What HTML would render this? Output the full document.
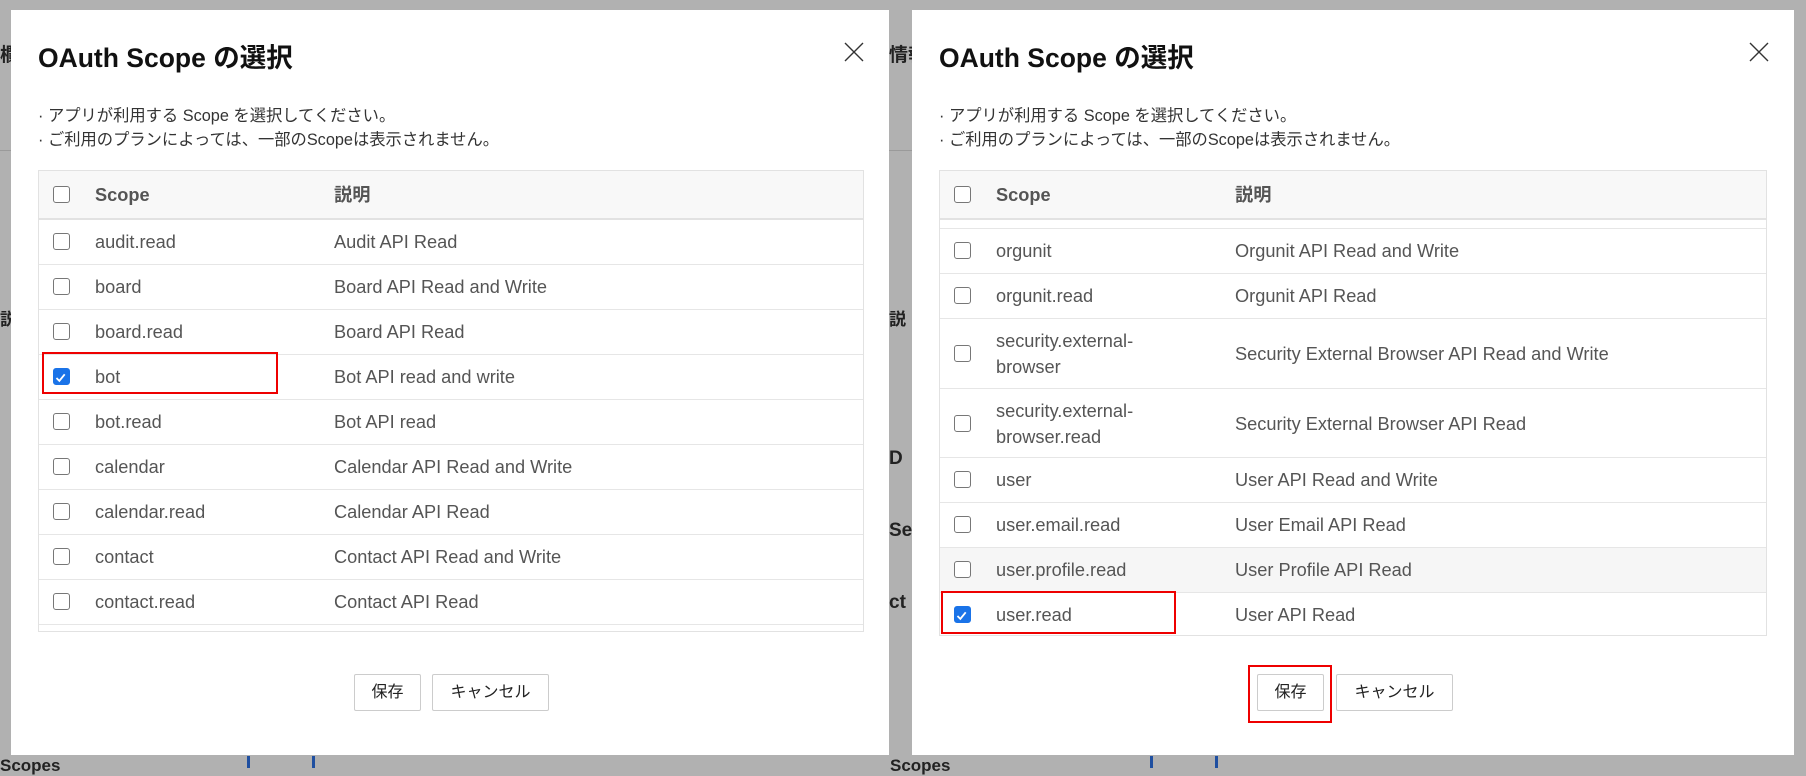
<!DOCTYPE html>
<html><head><meta charset="utf-8"><style>
*{box-sizing:border-box;margin:0;padding:0}
body{width:1806px;height:766px;background:#b1b1b1;position:relative;overflow:hidden;font-family:"Liberation Sans","Noto Sans CJK JP",sans-serif;color:#555}
.bgt{position:absolute;font-weight:bold;color:#222;font-size:19px}
.line{position:absolute;height:1px;background:#9a9a9a}
.modal{position:absolute;top:10px;height:745px;background:#fff}
.title{position:absolute;left:27px;top:26px;font-size:26.5px;font-weight:bold;color:#111}
.close{position:absolute;top:32px;width:20px;height:20px}
.note{position:absolute;left:27px;font-size:16.3px;color:#333}
.tbl{position:absolute;left:27px;width:826px;border:1px solid #e2e2e2;overflow:hidden;background:#fff}
.row{position:absolute;left:0;right:0;border-bottom:1px solid #e6e6e6;font-size:18.2px;color:#555}
.row.h{background:#f8f8f8;font-weight:bold;border-bottom:2px solid #e2e2e2}
.cb{position:absolute;left:14px;width:17px;height:17px;border:1.5px solid #777;border-radius:3px;background:#fff}
.cb.on{background:#1a73e8;border-color:#1a73e8}
.sc{position:absolute;left:56px;line-height:26px}
.ds{position:absolute;left:295px}
.red{position:absolute;border:2px solid #e00}
.btn{position:absolute;top:664px;height:37px;border:1px solid #ccc;border-radius:2px;background:#fff;font-size:16px;color:#222;text-align:center;line-height:35px}
</style></head><body>
<div class="bgt" style="left:0;top:40px">欄</div>
<div class="bgt" style="left:889px;top:40px">情報</div>
<div class="line" style="left:0;top:150px;width:12px"></div>
<div class="line" style="left:889px;top:150px;width:23px"></div>
<div class="bgt" style="left:0;top:305px;font-size:17px">説</div>
<div class="bgt" style="left:889px;top:305px;font-size:17px">説</div>
<div class="bgt" style="left:889px;top:448px">D</div>
<div class="bgt" style="left:889px;top:520px">Sec</div>
<div class="bgt" style="left:889px;top:592px">ct</div>
<div class="bgt" style="left:0;top:756px;font-size:17px">Scopes</div>
<div class="bgt" style="left:890px;top:756px;font-size:17px">Scopes</div>
<div style="position:absolute;left:247px;top:756px;width:68px;height:12px;border-left:3px solid #1f4fa0;border-right:3px solid #1f4fa0"></div>
<div style="position:absolute;left:1150px;top:756px;width:68px;height:12px;border-left:3px solid #1f4fa0;border-right:3px solid #1f4fa0"></div>

<!-- Left modal -->
<div class="modal" style="left:11px;width:878px">
  <div class="title">OAuth Scope の選択</div>
  <svg class="close" style="left:833px" viewBox="0 0 20 20"><path d="M1 1L19 19M19 1L1 19" stroke="#333" stroke-width="1.4"/></svg>
  <div class="note" style="top:92px">· アプリが利用する Scope を選択してください。</div>
  <div class="note" style="top:116px">· ご利用のプランによっては、一部のScopeは表示されません。</div>
  <div class="tbl" style="top:160px;height:462px">
    <div class="row h" style="top:0;height:49px"><div class="cb" style="top:15px"></div><div class="sc" style="top:11px">Scope</div><div class="ds" style="top:11px;line-height:26px">説明</div></div>
    <div class="row" style="top:49px;height:45px"><div class="cb" style="top:13px"></div><div class="sc" style="top:9px">audit.read</div><div class="ds" style="top:9px;line-height:26px">Audit API Read</div></div>
    <div class="row" style="top:94px;height:45px"><div class="cb" style="top:13px"></div><div class="sc" style="top:9px">board</div><div class="ds" style="top:9px;line-height:26px">Board API Read and Write</div></div>
    <div class="row" style="top:139px;height:45px"><div class="cb" style="top:13px"></div><div class="sc" style="top:9px">board.read</div><div class="ds" style="top:9px;line-height:26px">Board API Read</div></div>
    <div class="row" style="top:184px;height:45px"><div class="cb on" style="top:13px"><svg viewBox="0 0 17 17" width="14" height="14"><path d="M3 8.5L6.5 12L13 4" stroke="#fff" stroke-width="2.2" fill="none"/></svg></div><div class="sc" style="top:9px">bot</div><div class="ds" style="top:9px;line-height:26px">Bot API read and write</div></div>
    <div class="row" style="top:229px;height:45px"><div class="cb" style="top:13px"></div><div class="sc" style="top:9px">bot.read</div><div class="ds" style="top:9px;line-height:26px">Bot API read</div></div>
    <div class="row" style="top:274px;height:45px"><div class="cb" style="top:13px"></div><div class="sc" style="top:9px">calendar</div><div class="ds" style="top:9px;line-height:26px">Calendar API Read and Write</div></div>
    <div class="row" style="top:319px;height:45px"><div class="cb" style="top:13px"></div><div class="sc" style="top:9px">calendar.read</div><div class="ds" style="top:9px;line-height:26px">Calendar API Read</div></div>
    <div class="row" style="top:364px;height:45px"><div class="cb" style="top:13px"></div><div class="sc" style="top:9px">contact</div><div class="ds" style="top:9px;line-height:26px">Contact API Read and Write</div></div>
    <div class="row" style="top:409px;height:45px"><div class="cb" style="top:13px"></div><div class="sc" style="top:9px">contact.read</div><div class="ds" style="top:9px;line-height:26px">Contact API Read</div></div>
  </div>
  <div class="red" style="left:31px;top:342px;width:236px;height:42px"></div>
  <div class="btn" style="left:343px;width:67px">保存</div>
  <div class="btn" style="left:421px;width:117px">キャンセル</div>
</div>

<!-- Right modal -->
<div class="modal" style="left:912px;width:882px">
  <div class="title">OAuth Scope の選択</div>
  <svg class="close" style="left:837px" viewBox="0 0 20 20"><path d="M1 1L19 19M19 1L1 19" stroke="#333" stroke-width="1.4"/></svg>
  <div class="note" style="top:92px">· アプリが利用する Scope を選択してください。</div>
  <div class="note" style="top:116px">· ご利用のプランによっては、一部のScopeは表示されません。</div>
  <div class="tbl" style="top:160px;height:466px;width:828px">
    <div class="row" style="top:49px;height:9px"></div>
    <div class="row" style="top:58px;height:45px"><div class="cb" style="top:13px"></div><div class="sc" style="top:9px">orgunit</div><div class="ds" style="top:9px;line-height:26px">Orgunit API Read and Write</div></div>
    <div class="row" style="top:103px;height:45px"><div class="cb" style="top:13px"></div><div class="sc" style="top:9px">orgunit.read</div><div class="ds" style="top:9px;line-height:26px">Orgunit API Read</div></div>
    <div class="row" style="top:148px;height:70px"><div class="cb" style="top:26px"></div><div class="sc" style="top:9px">security.external-<br>browser</div><div class="ds" style="top:22px;line-height:26px">Security External Browser API Read and Write</div></div>
    <div class="row" style="top:218px;height:69px"><div class="cb" style="top:26px"></div><div class="sc" style="top:9px">security.external-<br>browser.read</div><div class="ds" style="top:22px;line-height:26px">Security External Browser API Read</div></div>
    <div class="row" style="top:287px;height:45px"><div class="cb" style="top:13px"></div><div class="sc" style="top:9px">user</div><div class="ds" style="top:9px;line-height:26px">User API Read and Write</div></div>
    <div class="row" style="top:332px;height:45px"><div class="cb" style="top:13px"></div><div class="sc" style="top:9px">user.email.read</div><div class="ds" style="top:9px;line-height:26px">User Email API Read</div></div>
    <div class="row" style="top:377px;height:45px;background:#f6f6f6"><div class="cb" style="top:13px"></div><div class="sc" style="top:9px">user.profile.read</div><div class="ds" style="top:9px;line-height:26px">User Profile API Read</div></div>
    <div class="row" style="top:422px;height:45px"><div class="cb on" style="top:13px"><svg viewBox="0 0 17 17" width="14" height="14"><path d="M3 8.5L6.5 12L13 4" stroke="#fff" stroke-width="2.2" fill="none"/></svg></div><div class="sc" style="top:9px">user.read</div><div class="ds" style="top:9px;line-height:26px">User API Read</div></div>
    <div class="row h" style="top:0;height:49px"><div class="cb" style="top:15px"></div><div class="sc" style="top:11px">Scope</div><div class="ds" style="top:11px;line-height:26px">説明</div></div>
  </div>
  <div class="red" style="left:29px;top:581px;width:235px;height:43px"></div>
  <div class="btn" style="left:345px;width:67px">保存</div>
  <div class="red" style="left:336px;top:655px;width:84px;height:58px"></div>
  <div class="btn" style="left:424px;width:117px">キャンセル</div>
</div>
</body></html>
